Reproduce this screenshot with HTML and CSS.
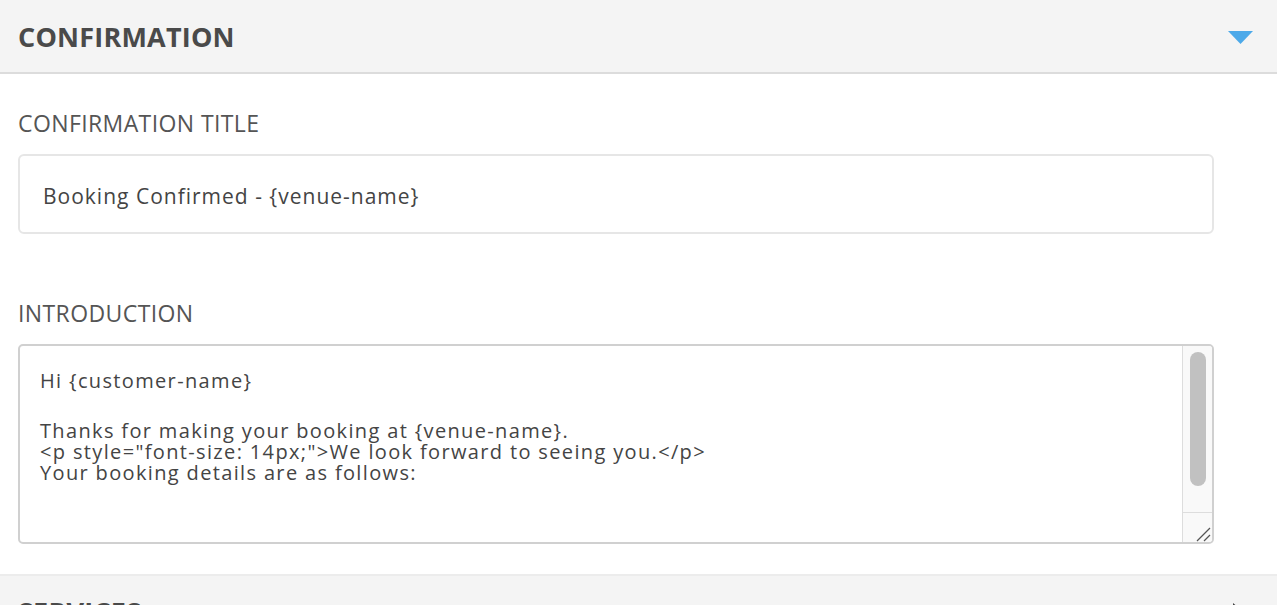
FILE: index.html
```html
<!DOCTYPE html>
<html>
<head>
<meta charset="utf-8">
<link rel="stylesheet" href="styles.css">
</head>
<body>
<div class="panel">
  <div class="section-header">
    <h2 class="section-title">CONFIRMATION</h2>
    <svg class="caret-down" width="25" height="13" viewBox="0 0 25 13"><polygon points="0,0 25,0 12.5,13" fill="#4ca9e9"/></svg>
  </div>
  <div class="section-body">
    <div class="field">
      <div class="label">CONFIRMATION TITLE</div>
      <div class="input">Booking Confirmed - {venue-name}</div>
    </div>
    <div class="field field-intro">
      <div class="label">INTRODUCTION</div>
      <div class="textarea">
        <div class="textarea-text">
          <div class="line">Hi {customer-name}</div>
          <div class="blank"></div>
          <div class="line">Thanks for making your booking at {venue-name}.</div>
          <div class="line">&lt;p style="font-size: 14px;"&gt;We look forward to seeing you.&lt;/p&gt;</div>
          <div class="line">Your booking details are as follows:</div>
        </div>
        <div class="scrollbar">
          <div class="track"><div class="thumb"></div></div>
          <div class="resizer">
            <svg width="16" height="16" viewBox="0 0 16 16"><line x1="1" y1="15" x2="14" y2="2" stroke="#555" stroke-width="1.2"/><line x1="8" y1="15" x2="14" y2="9" stroke="#555" stroke-width="1.2"/></svg>
          </div>
        </div>
      </div>
    </div>
  </div>
  <div class="section-header section-header-next">
    <h2 class="section-title">SERVICES</h2>
    <svg class="caret-right" width="12" height="20" viewBox="0 0 12 20"><polygon points="0,0 12,10 0,20" fill="#444"/></svg>
  </div>
</div>
</body>
</html>
```
FILE: styles.css
```css
html, body {
  margin: 0;
  padding: 0;
  overflow: hidden;
  background: #ffffff;
}
body {
  font-family: "Open Sans", "Noto Sans", sans-serif;
  color: #4a4a4a;
}
.panel {
  width: 1277px;
}
.section-header {
  height: 74px;
  box-sizing: border-box;
  background: #f4f4f4;
  border-bottom: 2px solid #dcdcdc;
  display: flex;
  align-items: center;
  justify-content: space-between;
  padding: 0 24px 0 18px;
}
.section-title {
  margin: 0;
  font-size: 27px;
  font-weight: 700;
  color: #4a4a4a;
  letter-spacing: 0.2px;
}
.caret-down {
  display: block;
  margin-top: 3px;
}
.section-body {
  padding: 34px 63px 30px 18px;
}
.field-intro {
  margin-top: 64px;
}
.label {
  font-size: 23px;
  line-height: 30px;
  letter-spacing: 0.4px;
  color: #555555;
  margin-bottom: 16px;
}
.input {
  height: 80px;
  border: 2px solid #e6e6e6;
  border-radius: 6px;
  box-sizing: border-box;
  padding: 26px 23px 0;
  font-size: 21px;
  line-height: 28px;
  letter-spacing: 1px;
  color: #444444;
}
.textarea {
  height: 200px;
  box-sizing: border-box;
  border: 2px solid #d0d0d0;
  border-radius: 5px;
  display: flex;
  overflow: hidden;
}
.textarea-text {
  flex: 1;
  padding: 24px 20px 0;
  font-size: 20px;
  line-height: 21px;
  letter-spacing: 1.35px;
  color: #444444;
  white-space: nowrap;
  overflow: hidden;
}
.blank {
  height: 29px;
}
.scrollbar {
  width: 29px;
  border-left: 1px solid #dddddd;
  display: flex;
  flex-direction: column;
  background: #f9f9f9;
}
.track {
  flex: 1;
  padding: 6px 6px 0 7px;
}
.thumb {
  height: 134px;
  background: #c1c1c1;
  border-radius: 8px;
}
.resizer {
  height: 29px;
  border-top: 1px solid #dddddd;
  display: flex;
  align-items: flex-end;
  justify-content: flex-end;
}
.resizer svg {
  display: block;
}
.section-header-next {
  height: 76px;
  border-top: 2px solid #ececec;
  border-bottom: none;
  padding-right: 32px;
  padding-bottom: 3px;
}
.caret-right {
  display: block;
  margin-top: 3px;
}
```
